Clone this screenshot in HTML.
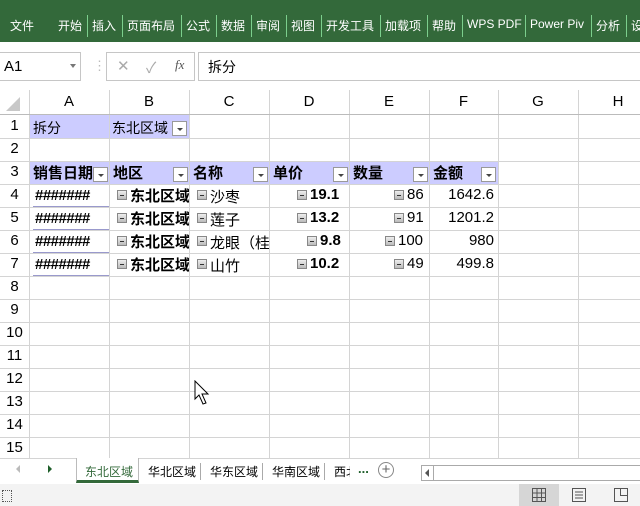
<!DOCTYPE html><html><head><meta charset="utf-8"><style>
*{margin:0;padding:0;box-sizing:border-box}
body{width:640px;height:506px;overflow:hidden;background:#fff;position:relative;font-family:"Liberation Sans","Noto Sans CJK SC",sans-serif;font-size:13px;color:#000}
.a{position:absolute;white-space:nowrap}
.tab{position:absolute;top:17px;color:#fff;font-size:12px}
.sep{position:absolute;top:15px;width:1px;height:22px;background:#7ccf8d}
.vl{position:absolute;top:90px;width:1px;height:368px;background:#d4d4d4}
.hl{position:absolute;left:0;width:640px;height:1px;background:#d4d4d4}
.rn{position:absolute;left:0;width:29px;text-align:center;font-size:15px}
.cn{position:absolute;top:93px;font-size:15px;text-align:center}
.dd{position:absolute;width:15px;height:15px;border:1px solid #999;background:#fff}
.dd:after{content:"";position:absolute;left:4px;top:6px;border-left:3px solid transparent;border-right:3px solid transparent;border-top:3px solid #444}
.mi{position:absolute;width:10px;height:10px;border:1px solid #888;background:linear-gradient(#eee,#bbb)}
.mi:after{content:"";position:absolute;left:2px;top:4px;width:4px;height:1px;background:#333}
.b{font-weight:bold;font-size:15px}
.st{position:absolute;top:463px;font-size:12px;white-space:nowrap}
</style></head><body>
<div class="a" style="left:0;top:0;width:640px;height:42px;background:#33693a"></div>
<div class="tab" style="left:10px">文件</div>
<div class="tab" style="left:58px">开始</div><div class="sep" style="left:87px"></div>
<div class="tab" style="left:92px">插入</div><div class="sep" style="left:122px"></div>
<div class="tab" style="left:127px">页面布局</div><div class="sep" style="left:181px"></div>
<div class="tab" style="left:186px">公式</div><div class="sep" style="left:216px"></div>
<div class="tab" style="left:221px">数据</div><div class="sep" style="left:251px"></div>
<div class="tab" style="left:256px">审阅</div><div class="sep" style="left:286px"></div>
<div class="tab" style="left:291px">视图</div><div class="sep" style="left:321px"></div>
<div class="tab" style="left:326px">开发工具</div><div class="sep" style="left:380px"></div>
<div class="tab" style="left:385px">加载项</div><div class="sep" style="left:427px"></div>
<div class="tab" style="left:432px">帮助</div><div class="sep" style="left:462px"></div>
<div class="tab" style="left:467px">WPS PDF</div><div class="sep" style="left:525px"></div>
<div class="tab" style="left:530px">Power Piv</div><div class="sep" style="left:591px"></div>
<div class="tab" style="left:596px">分析</div><div class="sep" style="left:626px"></div>
<div class="tab" style="left:631px">设</div>
<div class="a" style="left:-1px;top:52px;width:82px;height:29px;border:1px solid #c6c6c6"></div>
<div class="a" style="left:4px;top:58px;font-size:15px">A1</div>
<div class="a" style="left:70px;top:64px;border-left:3px solid transparent;border-right:3px solid transparent;border-top:4px solid #777"></div>
<div class="a" style="left:93px;top:58px;color:#bbb">⋮</div>
<div class="a" style="left:106px;top:52px;width:89px;height:29px;border:1px solid #c6c6c6"></div>
<div class="a" style="left:117px;top:57px;color:#aaa;font-size:15px">✕</div>
<div class="a" style="left:146px;top:57px;color:#aaa;font-size:15px">✓</div>
<div class="a" style="left:175px;top:57px;color:#555;font-style:italic;font-family:'Liberation Serif',serif;font-size:13px">fx</div>
<div class="a" style="left:198px;top:52px;width:450px;height:29px;border:1px solid #c6c6c6"></div>
<div class="a" style="left:208px;top:57px;font-size:14px">拆分</div>
<div class="a" style="left:0;top:90px;width:640px;height:24px;background:#fff"></div>
<div class="a" style="left:6px;top:97px;border-left:14px solid transparent;border-bottom:14px solid #c8c8c8"></div>
<div class="a" style="left:29px;top:115px;width:160px;height:23px;background:#ccccff"></div>
<div class="a" style="left:29px;top:161px;width:469px;height:23px;background:#ccccff"></div>
<div class="vl" style="left:29px"></div><div class="vl" style="left:109px"></div><div class="vl" style="left:189px"></div><div class="vl" style="left:269px"></div><div class="vl" style="left:349px"></div><div class="vl" style="left:429px"></div><div class="vl" style="left:498px"></div><div class="vl" style="left:578px"></div>
<div class="hl" style="top:114px;background:#bbb"></div>
<div class="hl" style="top:138px"></div><div class="hl" style="top:161px"></div><div class="hl" style="top:184px"></div><div class="hl" style="top:207px"></div><div class="hl" style="top:230px"></div><div class="hl" style="top:253px"></div><div class="hl" style="top:276px"></div><div class="hl" style="top:299px"></div><div class="hl" style="top:322px"></div><div class="hl" style="top:345px"></div><div class="hl" style="top:368px"></div><div class="hl" style="top:391px"></div><div class="hl" style="top:414px"></div><div class="hl" style="top:437px"></div>
<div class="cn" style="left:29px;width:80px">A</div><div class="cn" style="left:109px;width:80px">B</div><div class="cn" style="left:189px;width:80px">C</div><div class="cn" style="left:269px;width:80px">D</div><div class="cn" style="left:349px;width:80px">E</div><div class="cn" style="left:429px;width:69px">F</div><div class="cn" style="left:498px;width:80px">G</div><div class="cn" style="left:578px;width:80px">H</div>
<div class="rn" style="top:117px">1</div><div class="rn" style="top:140px">2</div><div class="rn" style="top:163px">3</div><div class="rn" style="top:186px">4</div><div class="rn" style="top:209px">5</div><div class="rn" style="top:232px">6</div><div class="rn" style="top:255px">7</div><div class="rn" style="top:278px">8</div><div class="rn" style="top:301px">9</div><div class="rn" style="top:324px">10</div><div class="rn" style="top:347px">11</div><div class="rn" style="top:370px">12</div><div class="rn" style="top:393px">13</div><div class="rn" style="top:416px">14</div><div class="rn" style="top:439px">15</div>
<div class="a" style="left:33px;top:118px;font-size:14px">拆分</div>
<div class="a" style="left:112px;top:118px;font-size:14px;width:60px;overflow:hidden">东北区域</div>
<div class="dd" style="left:172px;top:121px"></div>
<div class="a b" style="left:33px;top:162px;width:60px;overflow:hidden">销售日期</div><div class="dd" style="left:93px;top:167px"></div>
<div class="a b" style="left:113px;top:162px">地区</div><div class="dd" style="left:173px;top:167px"></div>
<div class="a b" style="left:193px;top:162px">名称</div><div class="dd" style="left:253px;top:167px"></div>
<div class="a b" style="left:273px;top:162px">单价</div><div class="dd" style="left:333px;top:167px"></div>
<div class="a b" style="left:353px;top:162px">数量</div><div class="dd" style="left:413px;top:167px"></div>
<div class="a b" style="left:433px;top:162px">金额</div><div class="dd" style="left:481px;top:167px"></div>
<div class="a" style="left:35px;top:187px;font-size:15px;font-weight:bold;letter-spacing:-0.5px">#######</div>
<div class="a" style="left:35px;top:210px;font-size:15px;font-weight:bold;letter-spacing:-0.5px">#######</div>
<div class="a" style="left:35px;top:233px;font-size:15px;font-weight:bold;letter-spacing:-0.5px">#######</div>
<div class="a" style="left:35px;top:256px;font-size:15px;font-weight:bold;letter-spacing:-0.5px">#######</div>
<div class="a" style="left:33px;top:206px;width:76px;height:1px;background:#9999cc"></div>
<div class="a" style="left:33px;top:229px;width:76px;height:1px;background:#9999cc"></div>
<div class="a" style="left:33px;top:252px;width:76px;height:1px;background:#9999cc"></div>
<div class="a" style="left:33px;top:275px;width:76px;height:1px;background:#9999cc"></div>
<div class="mi" style="left:117px;top:190px"></div><div class="a b" style="left:130px;top:185px;width:59px;overflow:hidden">东北区域</div>
<div class="mi" style="left:117px;top:213px"></div><div class="a b" style="left:130px;top:208px;width:59px;overflow:hidden">东北区域</div>
<div class="mi" style="left:117px;top:236px"></div><div class="a b" style="left:130px;top:231px;width:59px;overflow:hidden">东北区域</div>
<div class="mi" style="left:117px;top:259px"></div><div class="a b" style="left:130px;top:254px;width:59px;overflow:hidden">东北区域</div>
<div class="mi" style="left:197px;top:190px"></div><div class="a" style="left:210px;top:186px;font-size:15px">沙枣</div>
<div class="mi" style="left:197px;top:213px"></div><div class="a" style="left:210px;top:209px;font-size:15px">莲子</div>
<div class="mi" style="left:197px;top:236px"></div><div class="a" style="left:210px;top:232px;font-size:15px;width:59px;overflow:hidden">龙眼（桂</div>
<div class="mi" style="left:197px;top:259px"></div><div class="a" style="left:210px;top:255px;font-size:15px">山竹</div>
<div class="mi" style="left:297px;top:190px"></div><div class="a b" style="left:310px;top:186px">19.1</div>
<div class="mi" style="left:297px;top:213px"></div><div class="a b" style="left:310px;top:209px">13.2</div>
<div class="mi" style="left:307px;top:236px"></div><div class="a b" style="left:320px;top:232px">9.8</div>
<div class="mi" style="left:297px;top:259px"></div><div class="a b" style="left:310px;top:255px">10.2</div>
<div class="mi" style="left:394px;top:190px"></div><div class="a" style="left:407px;top:186px;font-size:15px">86</div>
<div class="mi" style="left:394px;top:213px"></div><div class="a" style="left:407px;top:209px;font-size:15px">91</div>
<div class="mi" style="left:385px;top:236px"></div><div class="a" style="left:398px;top:232px;font-size:15px">100</div>
<div class="mi" style="left:394px;top:259px"></div><div class="a" style="left:407px;top:255px;font-size:15px">49</div>
<div class="a" style="left:429px;top:186px;width:65px;text-align:right;font-size:15px">1642.6</div>
<div class="a" style="left:429px;top:209px;width:65px;text-align:right;font-size:15px">1201.2</div>
<div class="a" style="left:429px;top:232px;width:65px;text-align:right;font-size:15px">980</div>
<div class="a" style="left:429px;top:255px;width:65px;text-align:right;font-size:15px">499.8</div>
<svg class="a" style="left:194px;top:380px" width="16" height="26"><path d="M1 1 L1 19 L5 15 L9 24 L12 23 L8 14 L14 14 Z" fill="#fff" stroke="#000"/></svg>
<div class="a" style="left:0;top:458px;width:640px;height:26px;background:#fff;border-top:1px solid #d4d4d4"></div>
<div class="a" style="left:16px;top:465px;border-top:4px solid transparent;border-bottom:4px solid transparent;border-right:4px solid #bbb"></div>
<div class="a" style="left:48px;top:465px;border-top:4px solid transparent;border-bottom:4px solid transparent;border-left:4px solid #1e5e2a"></div>
<div class="a" style="left:76px;top:458px;width:63px;height:25px;border-bottom:3px solid #33693a;border-left:1px solid #bbb;border-right:1px solid #bbb;background:#fff"></div>
<div class="st" style="left:85px;color:#33693a">东北区域</div>
<div class="st" style="left:148px">华北区域</div><div class="a" style="left:200px;top:463px;width:1px;height:17px;background:#aaa"></div>
<div class="st" style="left:210px">华东区域</div><div class="a" style="left:262px;top:463px;width:1px;height:17px;background:#aaa"></div>
<div class="st" style="left:272px">华南区域</div><div class="a" style="left:324px;top:463px;width:1px;height:17px;background:#aaa"></div>
<div class="st" style="left:334px;width:16px;overflow:hidden">西北</div>
<div class="a" style="left:358px;top:461px;color:#1e5e2a;font-weight:bold">...</div>
<div class="a" style="left:378px;top:462px;width:16px;height:16px;border:1.5px solid #888;border-radius:50%;text-align:center;line-height:13px;color:#666;font-size:15px">+</div>
<div class="a" style="left:421px;top:465px;width:525px;height:16px;border:1px solid #aaa"></div>
<div class="a" style="left:421px;top:465px;width:13px;height:16px;border:1px solid #aaa"></div>
<div class="a" style="left:425px;top:469px;border-top:4px solid transparent;border-bottom:4px solid transparent;border-right:4px solid #555"></div>
<div class="a" style="left:0;top:484px;width:640px;height:22px;background:#f3f3f3"></div>
<div class="a" style="left:2px;top:490px;width:10px;height:12px;border:1px dotted #555"></div>
<div class="a" style="left:519px;top:484px;width:40px;height:22px;background:#d6d6d6"></div>
<svg class="a" style="left:532px;top:488px" width="14" height="14"><path d="M0.5 0.5h13v13h-13zM0.5 5h13M0.5 9.5h13M5 .5v13M9.5 .5v13" fill="none" stroke="#555"/></svg>
<svg class="a" style="left:572px;top:488px" width="14" height="14"><path d="M0.5 0.5h13v13h-13zM3 4h8M3 7h8M3 10h8" fill="none" stroke="#555"/></svg>
<svg class="a" style="left:614px;top:488px" width="14" height="14"><path d="M0.5 0.5h13v13h-13zM6.5 .5v7h7" fill="none" stroke="#555"/></svg>
</body></html>
